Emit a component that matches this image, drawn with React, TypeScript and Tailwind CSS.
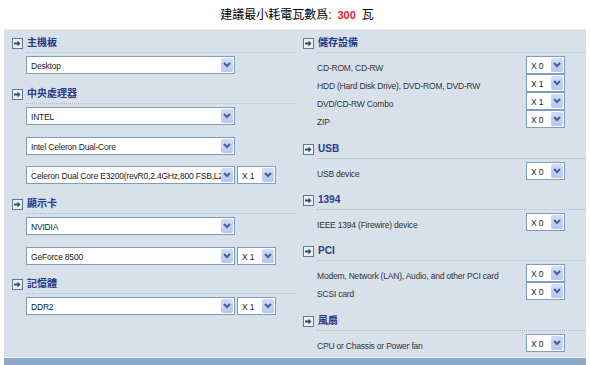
import React from 'react';

const Arrow = () => (
  <span className="flex h-[11px] w-[11px] items-center justify-center border border-[#5f7898] bg-[#eef2f7]">
    <svg width="7" height="7" viewBox="0 0 7 7">
      <path d="M0 2.5h3.5V0.5L6.5 3.5 3.5 6.5V4.5H0z" fill="#2f4d74" />
    </svg>
  </span>
);

const Header = ({ title, className = '' }: { title: string; className?: string }) => (
  <div className={className}>
    <div className="flex h-[12px] items-center">
      <Arrow />
      <span className="ml-[4px] text-[10px] font-bold leading-none text-[#2b3a8c]">{title}</span>
    </div>
    <div className="ml-[14px] mt-[3px] border-t border-dotted border-[#b0bccb]" />
  </div>
);

const Select = ({ value, w, className = '' }: { value: string; w: string; className?: string }) => (
  <div className={`flex h-[18px] items-stretch border border-[#7f9db9] bg-white p-px ${w} ${className}`}>
    <span className="flex-1 overflow-hidden whitespace-nowrap pl-[3px] pt-px text-[8.5px] leading-[14px] tracking-[-0.2px] text-[#222]">
      {value}
    </span>
    <span className="flex w-[12px] items-center justify-center rounded-[2px] bg-gradient-to-b from-[#cfdcfc] to-[#b3c7f7]">
      <svg width="8" height="6" viewBox="0 0 8 6">
        <path d="M1 1l3 3 3-3" stroke="#4d6185" strokeWidth="2" fill="none" />
      </svg>
    </span>
  </div>
);

const Row = ({ label, value }: { label: string; value: string }) => (
  <div className="flex h-[18px] items-start">
    <span className="flex-1 pt-[6px] text-[8.5px] leading-[12px] tracking-[-0.2px] text-[#333]">{label}</span>
    <Select value={value} w="w-[39px]" className="mr-[13px]" />
  </div>
);

const Pair = ({ value, className = '' }: { value: string; className?: string }) => (
  <div className={`flex gap-[2px] ${className}`}>
    <Select value={value} w="w-[209px]" />
    <Select value="X 1" w="w-[39px]" />
  </div>
);

export default function App() {
  return (
    <div className="h-[365px] w-[590px] overflow-hidden bg-white" style={{ fontFamily: '"Liberation Sans", "Noto Sans CJK TC", sans-serif' }}>
      <div className="flex h-[29px] items-center justify-center pl-[4px] pt-[1px] text-[12px] text-black">
        <span>建議最小耗電瓦數爲: </span>
        <span className="mx-[6px] text-[11px] font-bold text-[#e0202a]">300</span>
        <span>瓦</span>
      </div>
      <div className="mx-[4px] h-[328px] border-t border-[#e6ebf1] bg-[#d8e0e9]">
        <div className="grid grid-cols-[291px_290px] pt-[7px]">
          <div className="pl-[8px]">
            <Header title="主機板" />
            <div className="ml-[14px] mr-[8px]">
              <Select value="Desktop" w="w-[209px]" className="mt-[3px]" />
            </div>
            <Header title="中央處理器" className="mt-[14px]" />
            <div className="ml-[14px] mr-[8px]">
              <Select value="INTEL" w="w-[209px]" className="mt-[3px]" />
              <Select value="Intel Celeron Dual-Core" w="w-[209px]" className="mt-[12px]" />
              <Pair value="Celeron Dual Core E3200(revR0,2.4GHz,800 FSB,L2: 1MB)" className="mt-[11px]" />
            </div>
            <Header title="顯示卡" className="mt-[14px]" />
            <div className="ml-[14px] mr-[8px]">
              <Select value="NVIDIA" w="w-[209px]" className="mt-[3px]" />
              <Pair value="GeForce 8500" className="mt-[12px]" />
            </div>
            <Header title="記憶體" className="mt-[13px]" />
            <div className="ml-[14px] mr-[8px]">
              <Pair value="DDR2" className="mt-[3px]" />
            </div>
          </div>
          <div className="pl-[8px]">
            <Header title="儲存設備" />
            <div className="ml-[14px] mr-[7px] mt-[3px]">
              <Row label="CD-ROM, CD-RW" value="X 0" />
              <Row label="HDD (Hard Disk Drive), DVD-ROM, DVD-RW" value="X 1" />
              <Row label="DVD/CD-RW Combo" value="X 1" />
              <Row label="ZIP" value="X 0" />
            </div>
            <Header title="USB" className="mt-[15px]" />
            <div className="ml-[14px] mr-[7px] mt-[3px]">
              <Row label="USB device" value="X 0" />
            </div>
            <Header title="1394" className="mt-[14px]" />
            <div className="ml-[14px] mr-[7px] mt-[3px]">
              <Row label="IEEE 1394 (Firewire) device" value="X 0" />
            </div>
            <Header title="PCI" className="mt-[14px]" />
            <div className="ml-[14px] mr-[7px] mt-[3px]">
              <Row label="Modem, Network (LAN), Audio, and other PCI card" value="X 0" />
              <Row label="SCSI card" value="X 0" />
            </div>
            <Header title="風扇" className="mt-[15px]" />
            <div className="ml-[14px] mr-[7px] mt-[3px]">
              <Row label="CPU or Chassis or Power fan" value="X 0" />
            </div>
          </div>
        </div>
      </div>
      <div className="mx-[4px] h-px bg-[#eef2f6]" />
      <div className="mx-[4px] h-[10px] bg-[#8ea9c8]" />
    </div>
  );
}
